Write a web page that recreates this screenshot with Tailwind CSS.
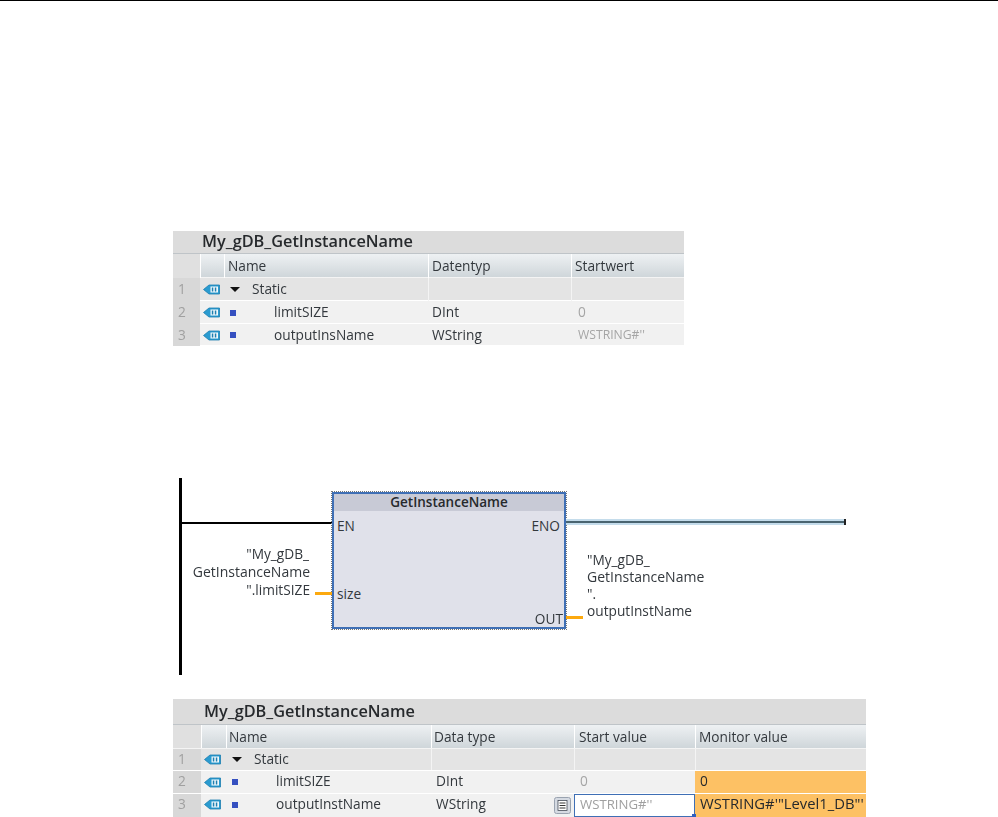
<!DOCTYPE html>
<html lang="de">
<head>
    <meta charset="UTF-8">
    <title>GetInstanceName</title>
    <script src="https://cdn.jsdelivr.net/npm/@tailwindcss/browser@4"></script>
</head>
<body class="bg-white h-[817px] overflow-hidden font-['Open_Sans',sans-serif] text-[13.7px] text-[#33383d]">
    <svg width="0" height="0" class="absolute">
        <symbol id="tag" viewBox="0 0 17 11">
            <path d="M0.5 5.500 L6 1 H16.500 V10 H6 Z" fill="#2a9bd0" stroke="#1d7fb0" stroke-width="0.8"/>
            <rect x="7.500" y="2.500" width="7.500" height="6" fill="#f2f9fc"/>
            <rect x="8.800" y="3.500" width="1.500" height="4" fill="#1f7fb0"/>
            <rect x="11.800" y="3.500" width="1.500" height="4" fill="#1f7fb0"/>
        </symbol>
    </svg>

    <div class="h-[1px] bg-black"></div>

    <!-- Tabelle 1 -->
    <div class="ml-[173px] mt-[230px] w-[511px] blur-[0.35px]">
        <div class="h-[22px] bg-[#dcdcdc] pl-[29px] text-[16.3px] font-semibold leading-[20px] text-[#26292c]">My_gDB_GetInstanceName</div>
        <div class="grid grid-cols-[27px_24px_204px_143px_113px] h-[24px] leading-[24px] border-t border-[#bfc4c8] bg-gradient-to-b from-[#eef1f3] to-[#cfd6da]">
            <div class="bg-[#e0e0e0]"></div>
            <div class="border-l border-white"></div>
            <div class="border-l border-white pl-[3px]">Name</div>
            <div class="border-l border-white pl-[3px]">Datentyp</div>
            <div class="border-l border-white pl-[3px]">Startwert</div>
        </div>
        <div class="grid grid-cols-[27px_24px_204px_143px_113px] h-[23px] items-stretch leading-[21px] bg-[#e4e4e4] border-t border-[#f4f4f4]">
            <div class="bg-[#d8d8d8] pl-[5px] text-[#a0a0a0]">1</div>
            <div class="flex items-center pl-[3px]"><svg width="17" height="11"><use href="#tag"/></svg></div>
            <div class="flex items-center pl-[6px] gap-[12px]"><span class="w-0 h-0 border-x-[5px] border-x-transparent border-t-[5px] border-t-[#111]"></span><span class="mb-[2px]">Static</span></div>
            <div class="border-l border-[#f4f4f4]"></div>
            <div class="border-l border-[#f4f4f4]"></div>
        </div>
        <div class="grid grid-cols-[27px_24px_204px_143px_113px] h-[23px] leading-[21px] bg-[#f1f1f1] border-t border-white">
            <div class="bg-[#d8d8d8] pl-[5px] text-[#a0a0a0]">2</div>
            <div class="flex items-center pl-[3px]"><svg width="17" height="11"><use href="#tag"/></svg></div>
            <div class="flex items-center pl-[6px]"><span class="w-[6px] h-[6px] bg-[#3550c0]"></span><span class="ml-[38px] mb-[2px]">limitSIZE</span></div>
            <div class="pl-[4px]">DInt</div>
            <div class="pl-[7px] text-[#a5a5a5]">0</div>
        </div>
        <div class="grid grid-cols-[27px_24px_204px_143px_113px] h-[22px] leading-[22px] bg-[#f1f1f1] border-t border-white">
            <div class="bg-[#d8d8d8] pl-[5px] text-[#a0a0a0]">3</div>
            <div class="flex items-center pl-[3px]"><svg width="17" height="11"><use href="#tag"/></svg></div>
            <div class="flex items-center pl-[6px]"><span class="w-[6px] h-[6px] bg-[#3550c0]"></span><span class="ml-[38px]">outputInsName</span></div>
            <div class="pl-[4px]">WString</div>
            <div class="pl-[7px] text-[12.200px] text-[#a5a5a5]">WSTRING#''</div>
        </div>
    </div>

    <!-- KOP Netzwerk -->
    <div class="relative mt-[133px] h-[197px] w-full blur-[0.35px]">
        <div class="absolute left-[179px] top-0 w-[3px] h-[197px] bg-black"></div>
        <div class="absolute left-[180px] top-[44px] w-[152px] h-[2px] bg-black"></div>

        <div class="absolute left-[332px] top-[14px] w-[234px] h-[137px] border-2 border-[#3f6fb5] outline outline-1 outline-dotted outline-[#777] bg-[#e0e1ea]">
            <div class="h-[17px] bg-[#c8cad6] text-center font-semibold text-[13.500px] leading-[17px] text-[#26292c]">GetInstanceName</div>
            <span class="absolute left-[3px] top-[22px]">EN</span>
            <span class="absolute right-[4px] top-[22px]">ENO</span>
            <span class="absolute left-[3px] top-[90px]">size</span>
            <span class="absolute right-[1px] top-[115px]">OUT</span>
        </div>

        <div class="absolute left-[566px] top-[41px] w-[278px] h-[6px] bg-[#c4dceb]">
            <div class="mt-[2px] h-[2px] bg-[#4a6470]"></div>
        </div>
        <div class="absolute left-[844px] top-[41px] w-[2px] h-[6px] bg-[#222]"></div>

        <div class="absolute left-[180px] top-[67px] w-[130px] text-right leading-[18px]">
            <div class="pr-[1px]">"My_gDB_</div>
            <div class="text-[14px]">GetInstanceName</div>
            <div>".limitSIZE</div>
        </div>
        <div class="absolute left-[315px] top-[114px] w-[17px] h-[3px] bg-[#fca90f]"></div>

        <div class="absolute left-[587px] top-[73px] leading-[17px]">
            <div>"My_gDB_</div>
            <div class="text-[14px]">GetInstanceName</div>
            <div>".</div>
            <div>outputInstName</div>
        </div>
        <div class="absolute left-[566px] top-[138px] w-[17px] h-[3px] bg-[#fca90f]"></div>
    </div>

    <!-- Tabelle 2 -->
    <div class="ml-[173px] mt-[24px] w-[693px] blur-[0.35px]">
        <div class="h-[25px] bg-[#dcdcdc] pl-[31px] text-[16.3px] font-semibold leading-[24px] text-[#26292c]">My_gDB_GetInstanceName</div>
        <div class="grid grid-cols-[28px_25px_205px_143px_121px_171px] h-[24px] leading-[23px] border-t border-[#bfc4c8] bg-gradient-to-b from-[#eef1f3] to-[#cfd6da]">
            <div class="bg-[#e0e0e0]"></div>
            <div class="border-l border-white"></div>
            <div class="border-l border-white pl-[2px]">Name</div>
            <div class="border-l border-white pl-[2px]">Data type</div>
            <div class="border-l border-white pl-[4px]">Start value</div>
            <div class="border-l border-white pl-[3px]">Monitor value</div>
        </div>
        <div class="grid grid-cols-[28px_25px_205px_143px_121px_171px] h-[22px] leading-[19px] bg-[#e4e4e4] border-t border-[#f4f4f4]">
            <div class="bg-[#d8d8d8] pl-[5px] text-[#a0a0a0]">1</div>
            <div class="flex items-center pl-[3px]"><svg width="17" height="11"><use href="#tag"/></svg></div>
            <div class="flex items-center pl-[6px] gap-[12px]"><span class="w-0 h-0 border-x-[5px] border-x-transparent border-t-[5px] border-t-[#111]"></span><span class="mb-[2px]">Static</span></div>
            <div class="border-l border-[#f4f4f4]"></div>
            <div class="border-l border-[#f4f4f4]"></div>
            <div class="border-l border-[#f4f4f4]"></div>
        </div>
        <div class="grid grid-cols-[28px_25px_205px_143px_121px_171px] h-[23px] leading-[20px] bg-[#f1f1f1] border-t border-white">
            <div class="bg-[#d8d8d8] pl-[5px] text-[#a0a0a0]">2</div>
            <div class="flex items-center pl-[3px]"><svg width="17" height="11"><use href="#tag"/></svg></div>
            <div class="flex items-center pl-[6px]"><span class="w-[6px] h-[6px] bg-[#3550c0]"></span><span class="ml-[38px] mb-[2px]">limitSIZE</span></div>
            <div class="pl-[5px]">DInt</div>
            <div class="pl-[6px] text-[#a5a5a5]">0</div>
            <div class="pl-[5px] bg-[#fdc164] text-[#26292c]">0</div>
        </div>
        <div class="grid grid-cols-[28px_25px_205px_143px_121px_171px] h-[24px] leading-[19px] bg-[#f1f1f1] border-t border-white">
            <div class="bg-[#d8d8d8] pl-[5px] text-[#a0a0a0]">3</div>
            <div class="flex items-center pl-[3px] pb-[2px]"><svg width="17" height="11"><use href="#tag"/></svg></div>
            <div class="flex items-center pl-[6px] pb-[2px]"><span class="w-[6px] h-[6px] bg-[#3550c0]"></span><span class="ml-[38px] mb-[2px]">outputInstName</span></div>
            <div class="relative pl-[5px]">WString
                <svg class="absolute right-[3px] top-[3px]" width="17" height="17" viewBox="0 0 17 17">
                    <rect x="0.500" y="0.500" width="16" height="16" rx="2" fill="#d5dae2" stroke="#9aa3b0"/>
                    <rect x="4" y="3.500" width="9" height="10" fill="#fff" stroke="#444a55" stroke-width="0.8"/>
                    <path d="M5.500 6h6M5.500 8.500h6M5.500 11h6" stroke="#333" stroke-width="1"/>
                </svg>
            </div>
            <div class="relative pl-[5px] leading-[19px] h-[23px] text-[13.200px] bg-white border border-[#3f6fb5] text-[#a0a0a0]">WSTRING#''
                <span class="absolute right-[-2px] bottom-[-2px] w-[4px] h-[4px] bg-[#2f5fc0]"></span>
            </div>
            <div class="pl-[5px] bg-[#fdc164] text-[14.800px] text-[#26292c] whitespace-nowrap">WSTRING#'"Level1_DB"'</div>
        </div>
    </div>
</body>
</html>
